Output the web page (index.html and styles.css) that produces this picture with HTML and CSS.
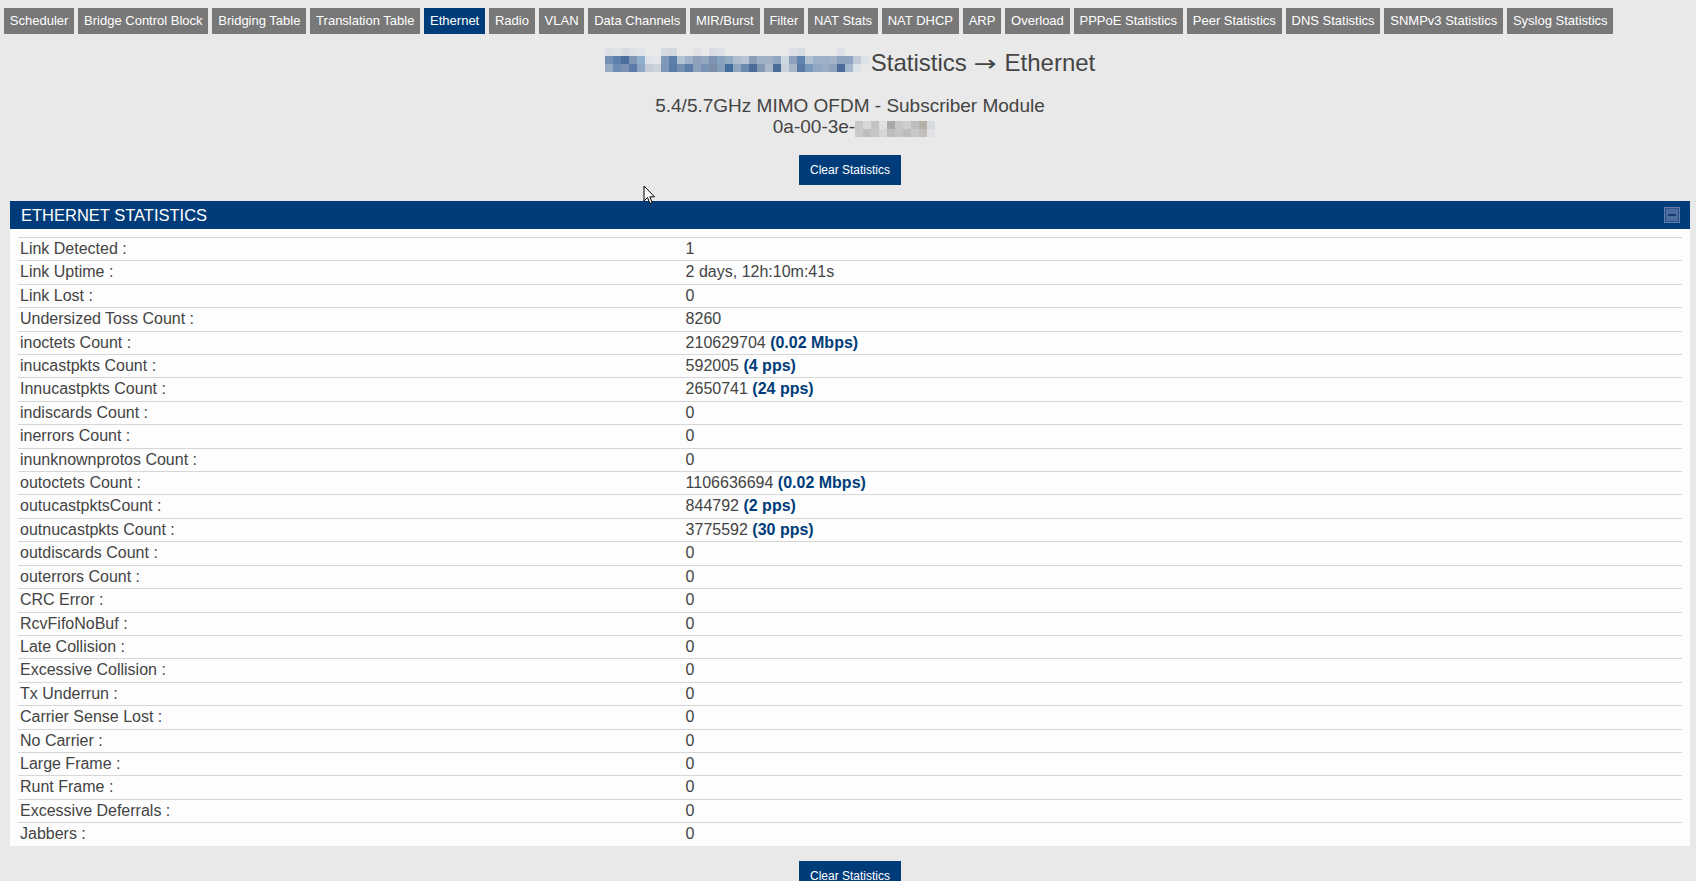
FILE: index.html
```html
<!DOCTYPE html>
<html lang="en">
<head>
<meta charset="utf-8">
<title>Statistics → Ethernet</title>
<link rel="stylesheet" href="styles.css">
</head>
<body>
<nav class="tabs">
  <a class="tab">Scheduler</a>
  <a class="tab">Bridge Control Block</a>
  <a class="tab">Bridging Table</a>
  <a class="tab">Translation Table</a>
  <a class="tab active">Ethernet</a>
  <a class="tab">Radio</a>
  <a class="tab">VLAN</a>
  <a class="tab">Data Channels</a>
  <a class="tab">MIR/Burst</a>
  <a class="tab">Filter</a>
  <a class="tab">NAT Stats</a>
  <a class="tab">NAT DHCP</a>
  <a class="tab">ARP</a>
  <a class="tab">Overload</a>
  <a class="tab">PPPoE Statistics</a>
  <a class="tab">Peer Statistics</a>
  <a class="tab">DNS Statistics</a>
  <a class="tab">SNMPv3 Statistics</a>
  <a class="tab">Syslog Statistics</a>
</nav>

<main class="content">
  <h1 class="page-title"><span class="mosaic-name"></span><span>Statistics <span class="arrow">→</span> Ethernet</span></h1>
  <div class="device">
    <div>5.4/5.7GHz MIMO OFDM - Subscriber Module</div>
    <div class="mac">0a-00-3e-<span class="mosaic-mac"></span></div>
  </div>
  <div class="actions"><button class="btn">Clear Statistics</button></div>

  <section class="panel">
    <header class="panel-head">
      <span>ETHERNET STATISTICS</span>
      <span class="min-btn"></span>
    </header>
    <div class="panel-body">
      <table class="stats">
        <tr><td>Link Detected :</td><td>1</td></tr>
        <tr><td>Link Uptime :</td><td>2 days, 12h:10m:41s</td></tr>
        <tr><td>Link Lost :</td><td>0</td></tr>
        <tr><td>Undersized Toss Count :</td><td>8260</td></tr>
        <tr><td>inoctets Count :</td><td>210629704 <b class="rate">(0.02 Mbps)</b></td></tr>
        <tr><td>inucastpkts Count :</td><td>592005 <b class="rate">(4 pps)</b></td></tr>
        <tr><td>Innucastpkts Count :</td><td>2650741 <b class="rate">(24 pps)</b></td></tr>
        <tr><td>indiscards Count :</td><td>0</td></tr>
        <tr><td>inerrors Count :</td><td>0</td></tr>
        <tr><td>inunknownprotos Count :</td><td>0</td></tr>
        <tr><td>outoctets Count :</td><td>1106636694 <b class="rate">(0.02 Mbps)</b></td></tr>
        <tr><td>outucastpktsCount :</td><td>844792 <b class="rate">(2 pps)</b></td></tr>
        <tr><td>outnucastpkts Count :</td><td>3775592 <b class="rate">(30 pps)</b></td></tr>
        <tr><td>outdiscards Count :</td><td>0</td></tr>
        <tr><td>outerrors Count :</td><td>0</td></tr>
        <tr><td>CRC Error :</td><td>0</td></tr>
        <tr><td>RcvFifoNoBuf :</td><td>0</td></tr>
        <tr><td>Late Collision :</td><td>0</td></tr>
        <tr><td>Excessive Collision :</td><td>0</td></tr>
        <tr><td>Tx Underrun :</td><td>0</td></tr>
        <tr><td>Carrier Sense Lost :</td><td>0</td></tr>
        <tr><td>No Carrier :</td><td>0</td></tr>
        <tr><td>Large Frame :</td><td>0</td></tr>
        <tr><td>Runt Frame :</td><td>0</td></tr>
        <tr><td>Excessive Deferrals :</td><td>0</td></tr>
        <tr><td>Jabbers :</td><td>0</td></tr>
      </table>
    </div>
  </section>

  <div class="actions bottom"><button class="btn">Clear Statistics</button></div>
</main>

<svg class="cursor" width="13" height="20" viewBox="0 0 13 20" aria-hidden="true">
  <path d="M1 1 L1 16 L4.5 12.5 L7 18.5 L9.2 17.6 L6.8 11.8 L11.5 11.8 Z" fill="#fff" stroke="#000" stroke-width="1" stroke-linejoin="round"/>
</svg>
</body>
</html>
```

FILE: styles.css
```css
html {
  scrollbar-width: none;
}

body {
  margin: 0;
  background: #e9e9e9;
  font-family: "Liberation Sans", Arial, sans-serif;
  color: #444;
  position: relative;
}

.tabs {
  display: flex;
  gap: 4px;
  padding: 8px 0 0 4px;
}

.tab {
  display: block;
  height: 26px;
  line-height: 26px;
  padding: 0 5.85px;
  background: #787878;
  color: #fff;
  font-size: 13px;
  white-space: nowrap;
  cursor: pointer;
}

.tab.active {
  background: #003c79;
}

.content {
  margin: 0 6px 0 10px;
}

.page-title {
  display: flex;
  justify-content: center;
  align-items: flex-start;
  gap: 2px;
  margin: 15px 0 0;
  font-size: 24px;
  line-height: 28px;
  font-weight: normal;
  color: #444;
}

.arrow {
  display: inline-block;
  font-family: "DejaVu Sans", sans-serif;
  font-size: 22px;
  transform: scaleX(1.25);
  margin: 0 3px;
}

.mosaic-name {
  display: block;
  width: 264px;
  height: 24px;
  margin-top: -1px;
  background-repeat: no-repeat;
  background-size: 264px 8px;
  background-position: 0 0, 0 8px, 0 16px;
  background-image:
    linear-gradient(to right,
      #dcdfe4 0 8px, #e0e2e6 8px 16px, #d8dbe1 16px 24px, #dde0e5 24px 32px, #e0e3e7 32px 40px,
      transparent 40px 56px, #d5d9e0 56px 64px, #d3d7de 64px 72px, transparent 72px 88px,
      #dfe1e5 88px 96px, transparent 96px 104px, #dadde3 104px 112px, #dde0e4 112px 120px,
      transparent 120px 184px, #dcdfe4 184px 192px, #d7dbe2 192px 200px, transparent 200px 232px,
      #dde0e5 232px 240px, transparent 240px 264px),
    linear-gradient(to right,
      #7390b4 0 8px, #5f80aa 8px 16px, #4b6f9d 16px 24px, #8097b4 24px 32px, #8fb0cc 32px 40px,
      #dfe2e8 40px 48px, #e3e5ea 48px 56px, #8199b8 56px 64px, #5c7fab 64px 72px, #b2c3d6 72px 80px,
      #9fb2c9 80px 88px, #8c9fbb 88px 96px, #95a7c0 96px 104px, #7f94b3 104px 112px, #87a2bf 112px 120px,
      #94abc4 120px 128px, #aebed1 128px 136px, #b7c4d3 136px 144px, #8c9db8 144px 152px, #a0b0c6 152px 160px,
      #9fb0c5 160px 168px, #91a6c0 168px 176px, #cfd7e1 176px 184px, #8c9fbc 184px 192px, #5e83ae 192px 200px,
      #b0bfd2 200px 208px, #9cb0c7 208px 216px, #9eb0c6 216px 224px, #a3b4ca 224px 232px, #8ea3bd 232px 240px,
      #8ea3bf 240px 248px, #c2cad6 248px 256px, #dde2e8 256px 264px),
    linear-gradient(to right,
      #97a9c3 0 8px, #6d8cb3 8px 16px, #7b91b1 16px 24px, #5b7aa7 24px 32px, #8ca7c4 32px 40px,
      #c4cbd6 40px 48px, #cdd3dd 48px 56px, #7f97b6 56px 64px, #5a7ca7 64px 72px, #7490b3 72px 80px,
      #5c7ea9 80px 88px, #8ca1bc 88px 96px, #7a93b4 96px 104px, #7a8ea9 104px 112px, #839ebb 112px 120px,
      #416e9e 120px 128px, #90a6bf 128px 136px, #6a8bb0 136px 144px, #4a6a97 144px 152px, #8298b4 152px 160px,
      #a9b8cb 160px 168px, #4a6b98 168px 176px, #c8d1dc 176px 184px, #a7b6c8 184px 192px, #5a7aa5 192px 200px,
      #7998bb 200px 208px, #93a8c2 208px 216px, #9aacc4 216px 224px, #8ea2bd 224px 232px, #4d6c99 232px 240px,
      #a6b8cc 240px 248px, #dde2e8 248px 256px, transparent 256px 264px);
}

.device {
  margin-top: 17px;
  text-align: center;
  font-size: 19px;
  line-height: 21px;
}

.mac {
  padding-left: 8px;
}

.mosaic-mac {
  display: inline-block;
  width: 80px;
  height: 16px;
  vertical-align: -4px;
  background-repeat: no-repeat;
  background-size: 80px 8px;
  background-position: 0 0, 0 8px;
  background-image:
    linear-gradient(to right,
      #c9c9c9 0 8px, #d8d8d8 8px 16px, #c3c3c3 16px 24px, #e0e0e0 24px 32px, #a9a9a9 32px 40px,
      #c8c8c8 40px 48px, #cfcfcf 48px 56px, #bdbdbd 56px 64px, #b6b0a9 64px 72px, #d7dadf 72px 80px),
    linear-gradient(to right,
      #cacaca 0 8px, #bdbdbd 8px 16px, #c7c7c7 16px 24px, #d6d6d6 24px 32px, #bdbdbd 32px 40px,
      #c5c5c5 40px 48px, #bdbdbd 48px 56px, #c9c9c9 56px 64px, #c2bfbb 64px 72px, #dfe1e4 72px 80px);
}

.actions {
  display: flex;
  justify-content: center;
  margin-top: 18px;
}

.actions.bottom {
  margin-top: 15px;
}

.btn {
  height: 30px;
  padding: 0 11px;
  border: 0;
  background: #003c79;
  color: #fff;
  font-family: "Liberation Sans", Arial, sans-serif;
  font-size: 12px;
  cursor: pointer;
}

.panel {
  margin-top: 16px;
  background: #fdfdfd;
}

.panel-head {
  display: flex;
  align-items: center;
  justify-content: space-between;
  height: 28px;
  padding: 0 10px 0 11px;
  background: #003c79;
  color: #fff;
  font-size: 16.5px;
  line-height: 28px;
}

.min-btn {
  position: relative;
  width: 16px;
  height: 16px;
  box-sizing: border-box;
  border: 1px solid #5f7eab;
  background: #4a6ca1;
  box-shadow: inset 0 0 0 1px #2a4f86;
}

.min-btn::after {
  content: "";
  position: absolute;
  left: 3px;
  right: 3px;
  top: 6px;
  height: 2px;
  background: #1b3867;
}

.panel-body {
  padding: 8px 8px 0;
}

.stats {
  width: 100%;
  border-collapse: collapse;
  font-size: 16px;
  line-height: 18.4px;
}

.stats td {
  padding: 2px 2px;
  border-top: 1px solid #d6d6d6;
  white-space: nowrap;
}

.stats td:first-child {
  width: 40%;
}

.rate {
  color: #003c79;
  font-weight: bold;
}

.cursor {
  position: absolute;
  left: 643px;
  top: 185px;
}
```
